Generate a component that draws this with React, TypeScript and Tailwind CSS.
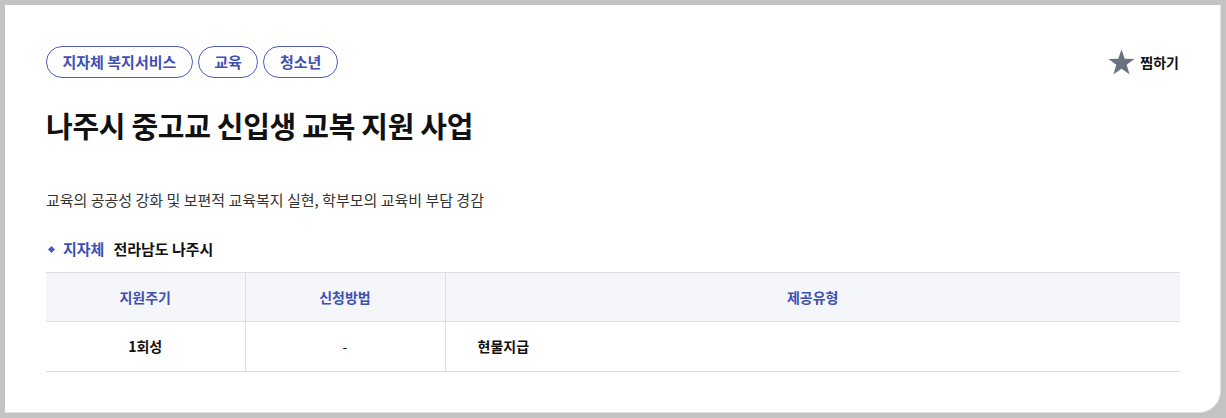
const tags = ["지자체 복지서비스", "교육", "청소년"];

const font = { fontFamily: '"Noto Sans CJK KR", "Noto Sans", sans-serif' };

export default function App() {
  return (
    <div className="h-[418px] w-[1226px] bg-[#c3c3c3] p-[5px]" style={font}>
      <div className="h-full rounded-br-[22px] border-b border-r border-[#e2e2e2] bg-white pl-[41px] pr-[41px] pt-[41px]">
        <div className="flex items-center justify-between">
          <div className="flex gap-[5px]">
            {tags.map((t) => (
              <span
                key={t}
                className="flex h-[32px] items-center rounded-full border border-[#4a5cc0] px-[15.5px] text-[15px] font-semibold text-[#3e50b4]"
              >
                {t}
              </span>
            ))}
          </div>
          <button type="button" className="flex items-center gap-[5px] text-[14px] font-bold text-[#111]">
            <svg width="27" height="26" viewBox="0 0 26 25">
              <path d="M13 0.5 L16.1 9.3 L25.5 9.5 L18 15.2 L20.7 24.3 L13 18.9 L5.3 24.3 L8 15.2 L0.5 9.5 L9.9 9.3 Z" fill="#6b6f82" />
            </svg>
            찜하기
          </button>
        </div>

        <h1 className="mt-[27px] text-[29px] font-bold leading-[40px] tracking-[-0.3px] text-[#111]">
          나주시 중고교 신입생 교복 지원 사업
        </h1>

        <p className="mt-[45px] text-[15px] leading-[20px] text-[#333]">
          교육의 공공성 강화 및 보편적 교육복지 실현, 학부모의 교육비 부담 경감
        </p>

        <div className="mt-[29px] flex items-center text-[15px] leading-[20px]">
          <span className="ml-[3px] mr-[9px] h-[5px] w-[5px] rotate-45 bg-[#4a5cc0]" />
          <span className="font-bold text-[#3e50b4]">지자체</span>
          <span className="ml-[9px] font-semibold text-[#111]">전라남도 나주시</span>
        </div>

        <table className="mt-[13px] w-[1134px] border-collapse text-[14px]">
          <thead>
            <tr className="h-[49px] border-y border-[#dedede] bg-[#f5f6f9]">
              <th className="w-[199px] border-r border-[#dedede] font-semibold text-[#3e50b4]">지원주기</th>
              <th className="w-[200px] border-r border-[#dedede] font-semibold text-[#3e50b4]">신청방법</th>
              <th className="font-semibold text-[#3e50b4]">제공유형</th>
            </tr>
          </thead>
          <tbody>
            <tr className="h-[50px] border-b border-[#dedede]">
              <td className="border-r border-[#dedede] text-center font-semibold text-[#111]">1회성</td>
              <td className="border-r border-[#dedede] text-center text-[#111]">-</td>
              <td className="pl-[32px] font-semibold text-[#111]">현물지급</td>
            </tr>
          </tbody>
        </table>
      </div>
    </div>
  );
}
